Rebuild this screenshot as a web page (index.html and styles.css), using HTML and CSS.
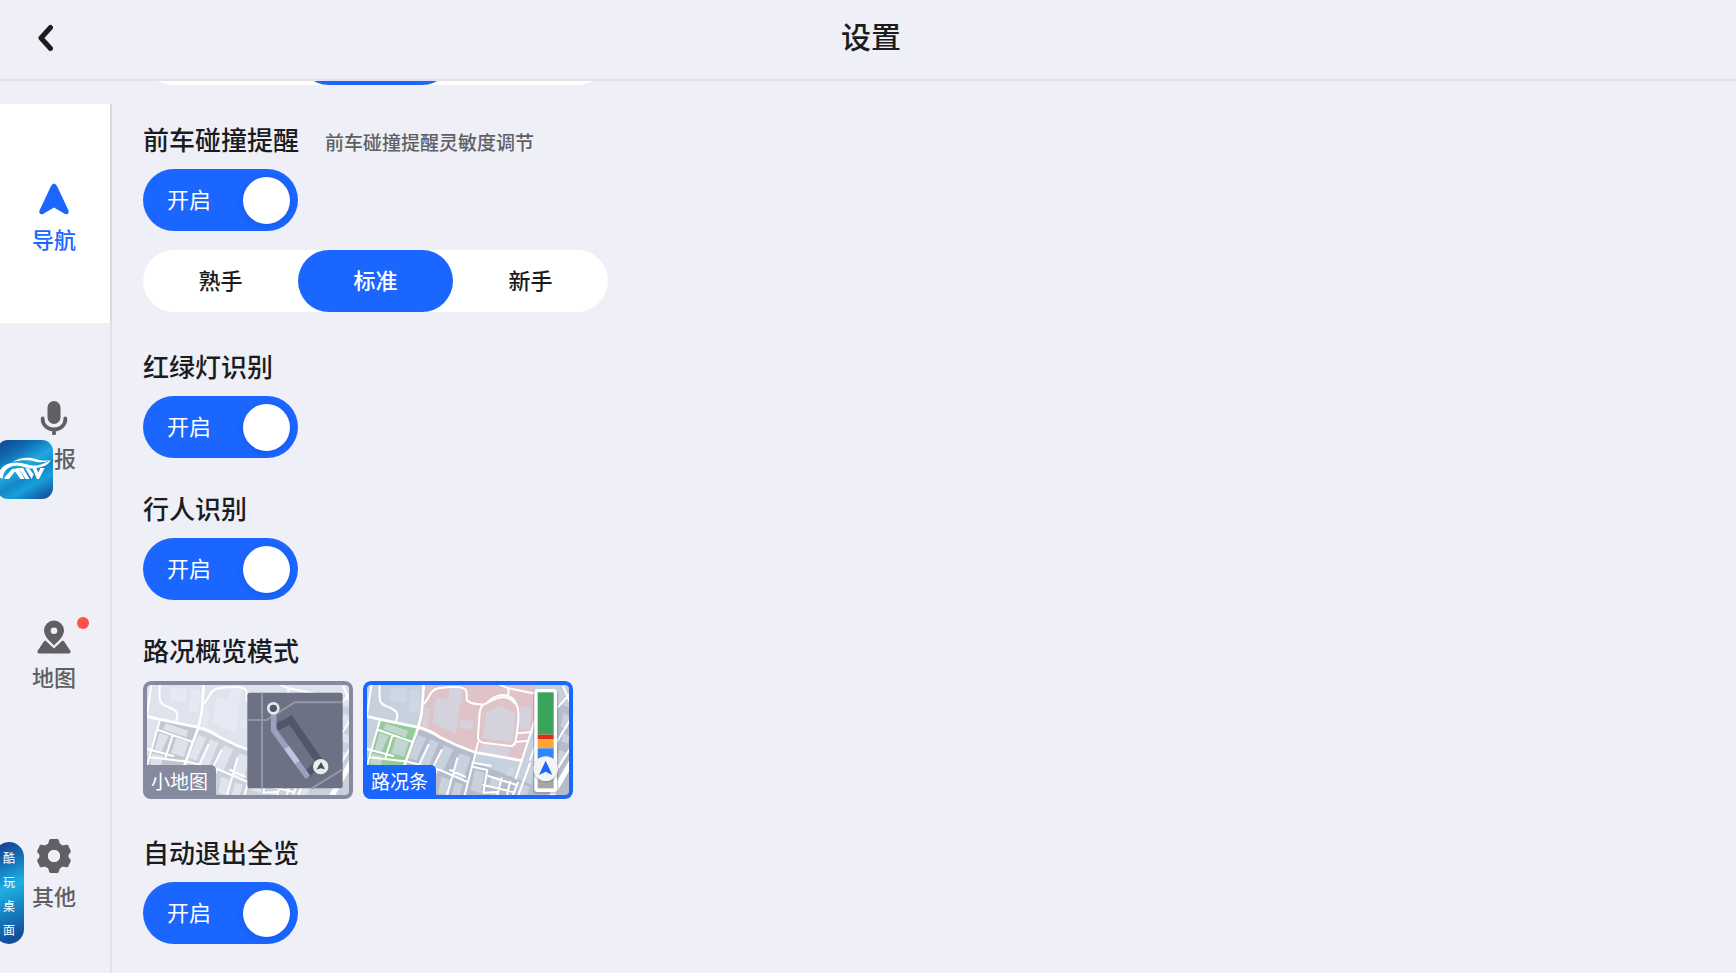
FILE: index.html
```html
<!DOCTYPE html>
<html lang="zh-CN">
<head>
  <meta charset="UTF-8">
  <meta name="viewport" content="width=device-width, initial-scale=1.0">
  <title>设置</title>
  <link rel="stylesheet" href="styles.css">
</head>
<body>
  <!-- base map shared by both thumbnails, colours come from the css variables -->
  <svg class="defs" aria-hidden="true">
    <symbol id="map" viewBox="39 33 630 354">
      <rect class="m-base" x="39" y="33" width="630" height="354"/>
      <path class="m-zone" d="M222 33L215 130L208 175L290 213L375 247L515 272L535 212L558 150V33Z"/>
      <path class="m-park" d="M88 150L203 172L160 295H40L75 200Z"/>
      <path class="m-dense" d="M205 178L375 247L345 390H120L165 275ZM370 275L560 350L545 390H340ZM620 100L680 120V390H540L560 220Z"/>
      <g class="m-build">
        <path d="M122 52l50 5-3 40-50-7zM182 58l28 3-3 68-32-5zM258 82l72 18-12 92-70-32zM300 52l36 5-3 45-38-12zM225 110l14 6-8 66-16-8zM332 149l38 5-3 24-38-5zM408 128l42-20 46 22-8 88-90-14zM512 110l32 4-4 64-30-2zM395 222l84 12-4 32-88-18zM475 290l20 4-8 26-20-4zM640 130l20 8-8 40-20-8z"/>
        <path d="M108 160l66 22-6 20-68-24zM88 188l28 10-22 48-20-6zM138 203l38 14-14 44-38-12zM68 250l32 8-8 30-32-6z"/>
        <path d="M205 195l24 10-30 66-22-6zM240 208l26 10-30 70-24-8zM282 226l28 12-32 68-26-8zM328 250l34 12-22 66-34-14zM232 304l26 8-14 46-26-6zM274 320l28 10-10 46-28-6zM316 336l22 8-10 34-22-4zM374 300l30 8-12 62-30-10zM425 320l26 8-8 26-26-6zM425 362l22 6-4 14-22-4zM510 340l30 10-10 28-28-6zM628 240l26 10-26 44-14-10zM640 190l20 8-6 24-20-8z"/>
      </g>
      <g class="m-road">
        <path stroke-width="8" d="M40 137L90 148L205 172Q240 180 270 202Q320 228 375 247Q440 258 515 272M222 33L215 130L205 172L160 295"/>
        <path d="M90 33C84 115 95 100 122 114C146 126 145 135 138 155M66 33L50 140M218 105C242 85 235 62 265 55Q350 42 350 68V90C365 108 385 98 398 105M398 105C430 90 440 82 460 82C480 82 500 100 503 112Q508 140 503 170L497 213Q495 228 480 228L400 218Q383 215 384 200L388 140Q390 112 398 105M410 100C430 75 460 70 480 80Q497 90 503 112M475 78V58M440 40L475 55L560 72M384 218L370 275L340 390M503 190L545 186M497 216L535 212M555 150L515 272L497 325M560 215L540 270"/>
        <path d="M90 150L50 290M85 180L185 215M128 195L105 268M40 232L62 240L130 258M60 262L175 275M160 272L270 300L350 335M235 225L205 290M275 240L245 300M322 265L290 380M260 298L230 390M300 300L345 320M367 278L422 287M367 290L412 300L400 368L440 366M415 318L500 345M400 345L490 366M455 325L438 390M480 335L468 390M504 338L485 385M540 280L500 390M640 50L670 120M625 110L670 60M600 250L660 150M620 300L670 220"/>
        <path stroke-width="16" d="M670 265L595 395"/>
      </g>
    </symbol>
  </svg>

  <header class="header">
    <button class="back" type="button" aria-label="返回">
      <svg viewBox="0 0 16 28" width="16" height="28"><path d="M13.500 3.500L4 14L13.500 24.500" fill="none" stroke="#1b1c1e" stroke-width="5" stroke-linecap="round" stroke-linejoin="round"/></svg>
    </button>
    <h1>设置</h1>
  </header>

  <div class="page">
    <nav class="sidebar">
      <a class="nav-item active" href="#nav">
        <svg viewBox="0 0 34 34"><path d="M14 4Q17-1 20 4L31.500 28.500Q32.500 33 28 32L17 25.500L6 32Q1.500 33 2.500 28.500Z"/></svg>
        <span>导航</span>
      </a>
      <a class="nav-item" href="#voice">
        <svg viewBox="0 0 34 34"><rect x="10.500" y="0" width="13" height="23" rx="6.500"/><path d="M5.700 17.500V18.500A11.300 10 0 0 0 28.300 18.500V17.500M17 28.500V32.500" fill="none" stroke="currentColor" stroke-width="3.800" stroke-linecap="round"/></svg>
        <span>播报</span>
      </a>
      <a class="nav-item" href="#map-settings">
        <svg viewBox="0 0 34 34"><path fill-rule="evenodd" d="M17 0.500A10 10 0 0 1 27 10.500C27 17 20 22 17 25.500C14 22 7 17 7 10.500A10 10 0 0 1 17 0.500ZM17 7.500A3.300 3.300 0 1 0 17 14.100A3.300 3.300 0 1 0 17 7.500Z"/><path d="M8.500 20.500L17 28.500L25.500 20.500Q26.500 20.500 27.500 22L33.500 31Q34 33.500 31.500 33.500H2.500Q0 33.500 0.500 31L6.500 22Q7.500 20.500 8.500 20.500Z"/></svg>
        <span>地图</span>
        <i class="dot"></i>
      </a>
      <a class="nav-item" href="#other">
        <svg viewBox="0 0 34 34"><path fill-rule="evenodd" d="M13 0.500H21L22.500 5L26 7L30.500 6L33.500 12.500L31 16V18L33.500 21.500L30.500 28L26 27L22.500 29L21 33.500H13L11.500 29L8 27L3.500 28L0.500 21.500L3 18V16L0.500 12.500L3.500 6L8 7L11.500 5ZM17 10.300A6.700 6.700 0 1 0 17 23.700A6.700 6.700 0 1 0 17 10.300Z" stroke="currentColor" stroke-width="1" stroke-linejoin="round"/></svg>
        <span>其他</span>
      </a>
    </nav>

    <main class="content">
      <div class="settings">
        <div class="segment" role="radiogroup" aria-label="灵敏度">
          <label><input type="radio" name="lane" aria-label="熟手"><span></span></label>
          <label><input type="radio" name="lane" aria-label="标准" checked><span></span></label>
          <label><input type="radio" name="lane" aria-label="新手"><span></span></label>
        </div>

        <section>
          <div class="title">
            <h2>前车碰撞提醒</h2>
            <p>前车碰撞提醒灵敏度调节</p>
          </div>
          <label class="switch"><input type="checkbox" checked><span>开启</span></label>
          <div class="segment" role="radiogroup" aria-label="前车碰撞提醒灵敏度调节">
            <label><input type="radio" name="collision"><span>熟手</span></label>
            <label><input type="radio" name="collision" checked><span>标准</span></label>
            <label><input type="radio" name="collision"><span>新手</span></label>
          </div>
        </section>

        <section>
          <div class="title"><h2>红绿灯识别</h2></div>
          <label class="switch"><input type="checkbox" checked><span>开启</span></label>
        </section>

        <section>
          <div class="title"><h2>行人识别</h2></div>
          <label class="switch"><input type="checkbox" checked><span>开启</span></label>
        </section>

        <section>
          <div class="title"><h2>路况概览模式</h2></div>
          <div class="modes">
            <label class="mode mode-mini">
              <input type="radio" name="mode">
              <svg viewBox="39 33 630 354">
                <use href="#map" x="39" y="33" width="630" height="354"/>
                <rect x="352" y="68" width="286" height="287" rx="8" fill="#6c7184"/>
                <g fill="none" stroke="#9296a5" stroke-width="6">
                  <path d="M396 68V355M353 150H410L494 97H638M545 355L638 298"/>
                </g>
                <path d="M440 172L482 150L568 275L530 315" fill="none" stroke="#51566a" stroke-width="22"/>
                <path d="M431 128V180L534 322" fill="none" stroke="#98a1bd" stroke-width="17"/>
                <path d="M470 233L502 277" fill="none" stroke="#bdc6e0" stroke-width="17"/>
                <circle cx="430" cy="115" r="15" fill="#51566a" stroke="#e8e8ea" stroke-width="8"/>
                <circle cx="572" cy="290" r="23" fill="#ececee"/>
                <path d="M573 276L585 298L572 295L559 299Z" fill="#464b5d"/>
              </svg>
              <span>小地图</span>
            </label>
            <label class="mode mode-bar">
              <input type="radio" name="mode" checked>
              <svg viewBox="39 33 630 354">
                <use href="#map" x="39" y="33" width="630" height="354"/>
                <rect x="549" y="59" width="76" height="313" rx="12" fill="#5c6474" opacity=".3"/>
                <rect x="553" y="57" width="68" height="309" rx="10" fill="#fff"/>
                <rect x="563" y="67" width="48" height="127" fill="#3ca35f"/>
                <rect x="563" y="194" width="48" height="13" fill="#df2d1b"/>
                <rect x="563" y="207" width="48" height="28" fill="#fea433"/>
                <rect x="563" y="235" width="48" height="62" fill="#2f86ff"/>
                <rect x="563" y="297" width="48" height="58" fill="#a6a6a8"/>
                <circle cx="587" cy="299" r="39" fill="#5c6474" opacity=".3"/>
                <circle cx="587" cy="296" r="37" fill="#f4f4f4"/>
                <path d="M587 272L607 315L587 305L567 315Z" fill="#1b66ff"/>
              </svg>
              <span>路况条</span>
            </label>
          </div>
        </section>

        <section>
          <div class="title"><h2>自动退出全览</h2></div>
          <label class="switch"><input type="checkbox" checked><span>开启</span></label>
        </section>
      </div>
    </main>
  </div>

  <!-- floating launchers over the sidebar -->
  <button class="float-app" type="button" aria-label="CarLife">
    <svg viewBox="0 0 168 177">
      <g fill="#fff">
        <path d="M6 112C2 82 32 66 62 68C86 68 98 79 122 76C140 72 152 65 161 59C154 76 140 80 119 84C92 90 82 76 58 77C34 78 18 92 17 116Z"/>
        <path d="M47 65C70 50 102 51 120 58Q138 65 160 59Q140 71 116 65C94 58 72 60 47 65Z"/>
        <path d="M22 113L46 86H60L36 117H24ZM50 88L64 84L83 117H70ZM64 84H78L98 117H86ZM85 85H96L110 103L104 117ZM106 84H118L124 98L130 84H143L126 117H120Z"/>
      </g>
    </svg>
  </button>
  <button class="float-desk" type="button">酷玩桌面</button>
</body>
</html>
```

FILE: styles.css
```css
* {
  box-sizing: border-box;
}
body {
  display: flex;
  flex-direction: column;
  height: 100vh;
  margin: 0;
  overflow: hidden;
  background-color: #eeeff7;
  color: #1b1c1e;
  font-family: "Noto Sans CJK SC", sans-serif;
}
h1, h2, p {
  margin: 0;
}
button {
  padding: 0;
  border: none;
  background: none;
  font-family: inherit;
  cursor: pointer;
}
svg {
  display: block;
}
.defs {
  position: absolute;
  width: 0;
  height: 0;
}

/* header */
.header {
  display: grid;
  grid-template-columns: 96px 1fr 90px;
  align-items: center;
  flex: none;
  height: 81px;
  padding-bottom: 4px;
  border-bottom: 2px solid #e1e3e8;
}
.header h1 {
  padding-bottom: 6px;
  font-size: 30px;
  font-weight: 500;
  line-height: 40px;
  text-align: center;
}
.back {
  display: flex;
  align-items: center;
  height: 60px;
  padding-left: 37px;
}

.page {
  display: flex;
  flex: 1;
  min-height: 0;
}

/* sidebar */
.sidebar {
  flex: none;
  width: 112px;
  margin-top: 23px;
  border-right: 2px solid #e2e3e8;
}
.nav-item {
  position: relative;
  display: flex;
  flex-direction: column;
  align-items: center;
  justify-content: center;
  gap: 10px;
  height: 219px;
  padding: 4px 2px 0 0;
  color: #5f6063;
  font-size: 22px;
  font-weight: 500;
  line-height: 24px;
  text-decoration: none;
}
.nav-item svg {
  width: 34px;
  height: 34px;
  fill: currentColor;
}
.nav-item.active {
  background-color: #fff;
  box-shadow: 2px 0 0 #d9dadd;
  color: #1b66ff;
}
.nav-item .dot {
  position: absolute;
  top: 75px;
  left: 77px;
  width: 12px;
  height: 12px;
  border-radius: 50%;
  background-color: #ff5148;
}

/* settings list */
.content {
  flex: 1;
  overflow: hidden;
  padding-left: 31px;
}
.settings {
  display: flex;
  flex-direction: column;
  align-items: flex-start;
  gap: 32px;
  margin-top: -58px;
}
.title {
  display: flex;
  align-items: baseline;
  gap: 26px;
  height: 40px;
  margin-bottom: 8px;
}
.title h2 {
  font-size: 26px;
  font-weight: 500;
  line-height: 36px;
}
.title p {
  color: #5f6063;
  font-size: 19px;
  font-weight: 500;
}

.switch {
  display: flex;
  align-items: center;
  justify-content: space-between;
  flex-direction: row-reverse;
  width: 155px;
  height: 62px;
  padding: 0 8px 0 24px;
  border-radius: 31px;
  background-color: #1b66ff;
  color: #fff;
  font-size: 22px;
  line-height: 30px;
}
.switch input {
  appearance: none;
  width: 47px;
  height: 47px;
  margin: 0;
  border-radius: 50%;
  background-color: #fff;
  box-shadow: 0 2px 6px rgba(0, 40, 140, 0.2);
}
.switch span {
  padding-bottom: 4px;
}

.segment {
  display: flex;
  width: 465px;
  height: 62px;
  margin-bottom: 4px;
  border-radius: 31px;
  background-color: #fff;
}
.switch + .segment {
  margin-top: 19px;
}
.segment label {
  display: flex;
  flex: 1;
}
.segment input {
  appearance: none;
  width: 0;
  margin: 0;
}
.segment span {
  flex: 1;
  border-radius: 31px;
  font-size: 22px;
  font-weight: 500;
  line-height: 58px;
  text-align: center;
}
.segment input:checked + span {
  background-color: #1b66ff;
  color: #fff;
}

/* traffic overview thumbnails */
.modes {
  display: flex;
  gap: 10px;
  margin: 9px 0 3px;
}
.mode {
  position: relative;
  width: 210px;
  height: 118px;
  overflow: hidden;
  border-radius: 8px;
}
.mode input {
  position: absolute;
  appearance: none;
  inset: 0;
  margin: 0;
  border: 4px solid var(--edge);
  border-radius: 8px;
}
.mode svg {
  width: 100%;
  height: 100%;
}
.mode span {
  position: absolute;
  left: 0;
  bottom: 0;
  padding: 0 8px 3px;
  border-radius: 0 5px 0 0;
  background-color: var(--edge);
  color: #fff;
  font-size: 19px;
  line-height: 31px;
}
.mode-mini {
  --edge: #858a9e;
  --base: #dfe3ed;
  --zone: #dfe3ed;
  --park: #c2c7d2;
  --dense: #cbd0db;
  --build: #e7ebf4;
}
.mode-bar {
  --edge: #1b66ff;
  --base: #c7d1de;
  --zone: #dfc3c8;
  --park: #94cb98;
  --dense: #b4bdcb;
  --build: #d0d8e5;
}
.m-base {
  fill: var(--base);
}
.m-zone {
  fill: var(--zone);
}
.m-park {
  fill: var(--park);
}
.m-dense {
  fill: var(--dense);
}
.m-build {
  fill: var(--build);
  opacity: 0.75;
}
.m-road {
  fill: none;
  stroke: #fff;
  stroke-width: 6px;
  stroke-linejoin: round;
  stroke-linecap: round;
}

/* floating launchers */
.float-app {
  position: absolute;
  top: 440px;
  left: -3px;
  width: 56px;
  height: 59px;
  border-radius: 11px;
  background: linear-gradient(150deg, #123f8c 0%, #0f6fb5 25%, #1fa9e0 45%, #1487c8 60%, #17a0dc 72%, #123f90 100%);
}
.float-app svg {
  width: 56px;
  height: 59px;
}
.float-desk {
  position: absolute;
  top: 842px;
  left: -6px;
  width: 30px;
  height: 102px;
  padding: 4px 9px 2px;
  border-radius: 15px;
  background: linear-gradient(155deg, #174a9c 8%, #1477bd 25%, #1fb0e4 45%, #1685c4 65%, #144f9c 90%);
  color: #fff;
  font-size: 12px;
  line-height: 24px;
}
```
